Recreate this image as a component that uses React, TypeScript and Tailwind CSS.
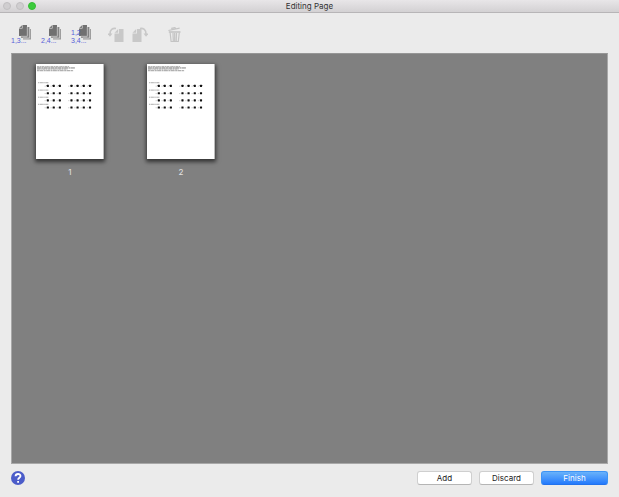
import React from 'react';

function StackIcon() {
  return (
    <svg className="block h-[15px] w-3" viewBox="0 0 12 15" aria-hidden="true">
      <path d="M8 4h4v10.500H4V13h4z" fill="#9a9a9a" />
      <path d="M8 2h2.400v10.800H2V11h6z" fill="#828282" />
      <path d="M3.500 0H8v11H0V3.500h3.500z" fill="#707070" />
      <path d="M3 .2V3H.2z" fill="#7d7d7d" />
      <path d="M8.300 1.800v9.500H2M10.600 3.800v9.300H4" fill="none" stroke="#e4e4e4" strokeWidth=".6" />
    </svg>
  );
}

function StackButton({ label, lines }: { label: string; lines: string[] }) {
  return (
    <button type="button" aria-label={label} className="relative flex h-5 w-5 justify-end">
      <StackIcon />
      <span className="absolute bottom-0 left-0 whitespace-nowrap text-left font-['Liberation_Sans',sans-serif] text-[7px] leading-[8px] text-[#5560d8]">
        {lines.map((line) => (
          <span key={line} className="block">{line}</span>
        ))}
      </span>
    </button>
  );
}

function RotateIcon({ flipped = false }: { flipped?: boolean }) {
  return (
    <svg className="block h-4 w-4" viewBox="0 0 16 16" aria-hidden="true">
      <g transform={flipped ? 'translate(16 0) scale(-1 1)' : undefined} fill="#c8c8c8">
        <path d={flipped ? 'M6.500 2H11v4.500h4.500V15h-9z' : 'M11 2h4.500v13h-9V6.500H11z'} />
        <path d={flipped ? 'M11.800 2l3.700 3.700h-3.700z' : 'M10.200 2v3.700H6.500z'} />
        <path d="M2 7C2 2.500 4.500 1 8 1.500" fill="none" stroke="#c8c8c8" strokeWidth="1.600" />
        <path d="M-.5 6.500h5L2 9.800z" />
      </g>
    </svg>
  );
}

function TrashIcon() {
  return (
    <svg className="block h-4 w-[13px]" viewBox="0 0 13 16" fill="none" stroke="#c4c4c4" aria-hidden="true">
      <path d="M.4 3.500L11.600 1.200M4 2.300l-.2-1 3.200-.7.300 1" strokeWidth="1.200" />
      <path d="M.8 5h11.700" strokeWidth="1.600" />
      <path d="M2.100 5.500l1 9h7.200l1-9M5 6l.3 8M6.700 6v8M8.500 6l-.3 8" strokeWidth="1.200" />
    </svg>
  );
}

const rows = [21.5, 29, 36.2, 43.4];
const columns = [12, 18, 24.2, 36, 42.2, 48.5, 54.8];

function PageDrawing() {
  return (
    <svg className="block h-full w-full" viewBox="0 0 68 95" aria-hidden="true">
      <g fill="none" stroke="#4a4a4a" strokeWidth=".7">
        <path d="M1 2h33" strokeDasharray="2.600 .5 1.200 .4" opacity=".7" />
        <path d="M1 3.300h39" strokeDasharray="4 .5 2 .4" />
        <path d="M1 4.500h31" strokeDasharray="3 .4 1.500 .5" opacity=".7" />
        <path d="M1 6.100h37" strokeDasharray="2 .4 4 .5" opacity=".8" />
      </g>
      {rows.map((y) => (
        <g key={y}>
          <path d={`M2 ${y - 3.2}h11`} stroke="#888" strokeWidth=".7" strokeDasharray="1.500 .5 3 .4" />
          {columns.map((x) => (
            <g key={x}>
              <rect x={x - 1.1} y={y - 1.1} width="2.200" height="2.200" rx=".4" fill="#111" />
              <path d={`M${x - 3.2} ${y + 0.3}h1`} stroke="#999" strokeWidth=".6" />
            </g>
          ))}
        </g>
      ))}
    </svg>
  );
}

function Thumbnail({ number }: { number: number }) {
  return (
    <figure className="flex flex-col items-center gap-2">
      <div className="h-[95px] w-[68px] border-r border-[#bdbdbd] bg-white shadow-[0_2px_4px_1px_rgba(0,0,0,0.6)]">
        <PageDrawing />
      </div>
      <figcaption className="text-[8px] leading-[10px] text-[#e4e4e4]">{number}</figcaption>
    </figure>
  );
}

const plainButton =
  'h-[14px] w-[55px] rounded-[3px] border border-[#cfcfcf] border-b-[#b5b5b5] bg-white text-[8px] leading-[12px] text-[#222]';

export default function App() {
  return (
    <div className="flex min-h-screen flex-col bg-[#ebebeb] font-['Inter','Liberation_Sans',sans-serif]">
      <header className="grid h-[13px] grid-cols-[1fr_auto_1fr] items-center border-b border-[#b7b5b7] bg-linear-to-b from-[#e8e6e8] to-[#d3d1d3] px-[3px]">
        <div className="flex gap-1">
          <button type="button" aria-label="Close" className="size-2 rounded-full border border-[#c1bfc1] bg-[#d0ced0]" />
          <button type="button" aria-label="Minimize" className="ml-px size-2 rounded-full border border-[#c1bfc1] bg-[#d0ced0]" />
          <button type="button" aria-label="Zoom" className="size-2 rounded-full border border-[#35bd35] bg-[#3dcb3d]" />
        </div>
        <h1 className="text-[8px] leading-[12px] text-[#333]">Editing Page</h1>
      </header>

      <nav aria-label="Page tools" className="flex h-10 items-center px-[11px] pt-1">
        <div className="flex gap-[10px]">
          <StackButton label="Select odd pages" lines={['1,3...']} />
          <StackButton label="Select even pages" lines={['2,4...']} />
          <StackButton label="Select all pages" lines={['1,2', '3,4...']} />
        </div>
        <div className="ml-[17px] flex gap-2">
          <button type="button" aria-label="Rotate left" disabled><RotateIcon /></button>
          <button type="button" aria-label="Rotate right" disabled><RotateIcon flipped /></button>
        </div>
        <button type="button" aria-label="Delete" disabled className="ml-5"><TrashIcon /></button>
      </nav>

      <main className="mx-[11px] flex flex-1 flex-wrap content-start gap-[43px] border border-[#a8a8a8] border-t-[#969696] bg-[#808080] px-6 py-[10px]">
        <Thumbnail number={1} />
        <Thumbnail number={2} />
      </main>

      <footer className="flex h-[33px] items-center gap-[7px] px-[11px] pb-[5px]">
        <button type="button" aria-label="Help" className="mr-auto size-[14px] rounded-full bg-[#4b5cc9]">
          <svg viewBox="0 0 14 14" className="block size-full" fill="none" stroke="white" strokeWidth="1.800" aria-hidden="true">
            <path d="M4.500 5.300C4.700 2.200 9.500 2.300 9.500 5.100 9.500 6.900 7.100 6.800 7.100 8.800" />
            <path d="M7.100 9.900v1.800" />
          </svg>
        </button>
        <button type="button" className={plainButton}>Add</button>
        <button type="button" className={plainButton}>Discard</button>
        <button type="button" className="h-[14px] w-[67px] rounded-[3px] border border-[#3d94f5] border-b-[#2272ec] bg-linear-to-b from-[#69b2fa] to-[#2379fc] text-[8px] leading-[12px] text-white">Finish</button>
      </footer>
    </div>
  );
}
